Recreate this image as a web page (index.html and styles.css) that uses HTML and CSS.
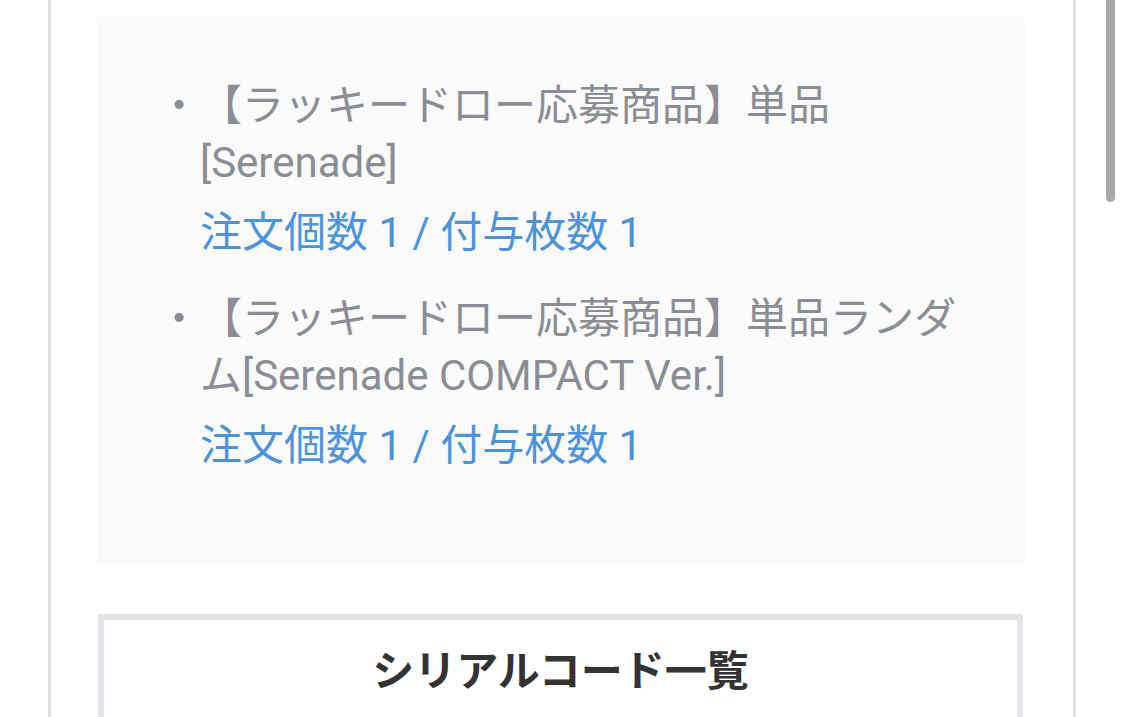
FILE: index.html
```html
<!DOCTYPE html>
<html lang="ja">
<head>
<meta charset="utf-8">
<title>応募商品</title>
<link rel="stylesheet" href="styles.css">
</head>
<body>
<div class="page">
  <div class="items">
    <ul class="item-list">
      <li class="item">
        <span class="mark">・</span>
        <div class="body">
          <div class="name">【ラッキードロー応募商品】単品[Serenade]</div>
          <div class="count">注文個数 1 / 付与枚数 1</div>
        </div>
      </li>
      <li class="item">
        <span class="mark">・</span>
        <div class="body">
          <div class="name">【ラッキードロー応募商品】単品ランダム[Serenade COMPACT Ver.]</div>
          <div class="count">注文個数 1 / 付与枚数 1</div>
        </div>
      </li>
    </ul>
  </div>
  <div class="serial">
    <h2 class="serial-title">シリアルコード一覧</h2>
  </div>
</div>
<div class="scroll-thumb"></div>
</body>
</html>
```

FILE: styles.css
```css
html, body {
  margin: 0;
  padding: 0;
  height: 717px;
  overflow: hidden;
  background: #ffffff;
}
body {
  font-family: Roboto, "Noto Sans CJK JP", sans-serif;
  position: relative;
}
.page {
  margin: 0 48px;
  border-left: 3px solid #e1e1e3;
  border-right: 3px solid #e1e1e3;
  padding: 17px 48px 0 46px;
  height: 717px;
  box-sizing: border-box;
}
.items {
  background: #fafafa;
  padding: 60px 40px 91px 61px;
}
.item-list {
  list-style: none;
  margin: 0;
  padding: 0;
}
.item {
  display: flex;
  font-size: 42px;
  line-height: 57px;
  color: #8a8d93;
}
.item + .item {
  margin-top: 29px;
}
.mark {
  flex: 0 0 42px;
  width: 42px;
}
.body {
  flex: 1 1 auto;
  min-width: 0;
}
.count {
  margin-top: 13px;
  color: #4d93dc;
}
.serial {
  margin: 49px 2px 0 1px;
  border: 6px solid #e3e3e8;
  border-bottom: none;
  padding-top: 22px;
  height: 77px;
}
.serial-title {
  margin: 0;
  text-align: center;
  font-size: 42px;
  line-height: 60px;
  font-weight: 700;
  color: #333333;
}
.scroll-thumb {
  position: absolute;
  top: 0;
  right: 9px;
  width: 9px;
  height: 202px;
  background: #a8a8a8;
  border-radius: 0 0 5px 5px;
}
```
